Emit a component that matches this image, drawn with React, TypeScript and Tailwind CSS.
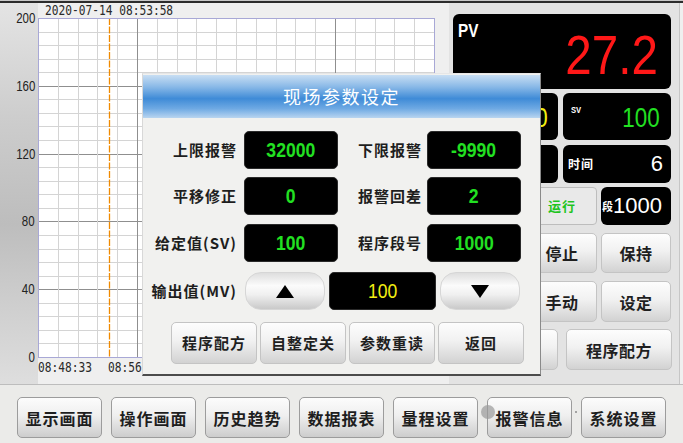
import React from "react";

const PW = 397;
const PH = 340;

function TrendPlot() {
  const hLines = Array.from({ length: 26 }, (_, i) => i);
  const vLines = Array.from({ length: 21 }, (_, j) => j);
  return (
    <svg width={PW} height={PH} className="block shrink-0">
      <rect x={0} y={0} width={PW} height={PH} fill="#ffffff" />
      {hLines.map((i) => {
        const y = Math.round((i * 339) / 25) + 0.5;
        return (
          <line
            key={"h" + i}
            x1={0}
            x2={PW}
            y1={y}
            y2={y}
            stroke={i % 5 === 0 ? "#8f8f8f" : "#d4d4d4"}
            strokeWidth={1}
          />
        );
      })}
      {vLines.map((j) => {
        const x = Math.round((j * 396) / 20) + 0.5;
        return (
          <line
            key={"v" + j}
            x1={x}
            x2={x}
            y1={0}
            y2={PH}
            stroke={j === 5 || j === 15 ? "#8f8f8f" : "#d4d4d4"}
            strokeWidth={1}
          />
        );
      })}
      {/* cursor line */}
      <line x1={71.5} x2={71.5} y1={0} y2={PH} stroke="#f08a00" strokeWidth={1.3} strokeDasharray="7 1.5" />
      <rect x={0.5} y={0.5} width={396} height={339} fill="none" stroke="#a8a8d6" strokeWidth={1} />
    </svg>
  );
}

function TrendChart() {
  const yLabels = ["200", "160", "120", "80", "40", "0"];
  return (
    <div className="w-[449px] h-full flex bg-[#efefef]">
      {/* value axis strip */}
      <div className="w-[38px] h-full shrink-0 bg-[linear-gradient(to_bottom,#e4e4e4,#cdcdcd_30%,#bdbdbd_58%,#cfcfcf_80%,#dedede)] flex flex-col items-end pt-[8px] pr-[3px]">
        {yLabels.map((l) => (
          <div key={l} className="h-[67.8px] shrink-0 flex items-start">
            <span className="block origin-right scale-x-[0.82] text-[14px] leading-[14px] text-[#222] font-['Liberation_Sans',Arial,sans-serif]">
              {l}
            </span>
          </div>
        ))}
      </div>
      <div className="flex flex-col">
        <div className="h-[15px] flex items-start pl-[7px]">
          <span className="block origin-left scale-x-[0.8] text-[14px] leading-[14px] text-[#2a2a2a] font-['DejaVu_Sans_Mono',monospace] whitespace-nowrap">
            2020-07-14 08:53:58
          </span>
        </div>
        <TrendPlot />
        <div className="flex items-start pt-[2px] text-[14px] leading-[14px] text-[#2a2a2a] font-['DejaVu_Sans_Mono',monospace]">
          <span className="block origin-left scale-x-[0.8] whitespace-nowrap">08:48:33</span>
          <span className="block origin-left scale-x-[0.8] whitespace-nowrap ml-[3px]">08:56:13</span>
        </div>
      </div>
    </div>
  );
}

const btnFace =
  "rounded-[5px] border border-[#c4c4c4] bg-[linear-gradient(to_bottom,#fdfdfd,#f1f1f1_45%,#d2d2d2)] flex items-center justify-center text-[#1f1f1f] font-bold";

function PanelButton({ label, w }: { label?: string; w: string }) {
  return (
    <div className={`${w} h-full shrink-0 ${btnFace} text-[16px] tracking-[0.5px]`}>{label}</div>
  );
}

function RightPanel() {
  const num = "font-['Liberation_Sans',Arial,sans-serif]";
  return (
    <div className="w-[234px] h-full flex">
      <div className="w-[231px] h-full bg-[#e3e3e3] border-r border-[#c6c6c6] pl-[4px] pt-[11px] flex flex-col">
        {/* PV */}
        <div className="w-[218px] h-[75px] rounded-[6px] bg-black flex justify-between items-start">
          <span className={`block origin-left scale-x-[0.85] mt-[8px] ml-[5px] text-white font-bold text-[18px] leading-none ${num}`}>
            PV
          </span>
          <span className={`block origin-right scale-x-[0.85] mt-[13px] mr-[13px] text-[#ff1818] text-[56px] leading-none ${num}`}>
            27.2
          </span>
        </div>
        {/* MV / SV */}
        <div className="mt-[4px] h-[47px] flex gap-[5px]">
          <div className="w-[105px] rounded-[6px] bg-black flex justify-end items-start">
            <span className={`block origin-right scale-x-[0.8] mt-[11px] mr-[10px] text-[#f2ee12] text-[28px] leading-none ${num}`}>
              100
            </span>
          </div>
          <div className="w-[108px] rounded-[6px] bg-black flex justify-between items-start">
            <span className={`block origin-left scale-x-[0.85] mt-[13px] ml-[8px] text-white font-bold text-[9px] leading-none ${num}`}>
              SV
            </span>
            <span className={`block origin-right scale-x-[0.8] mt-[11px] mr-[11px] text-[#22e022] text-[28px] leading-none ${num}`}>
              100
            </span>
          </div>
        </div>
        {/* times */}
        <div className="mt-[5px] h-[38px] flex gap-[5px]">
          <div className="w-[105px] rounded-[6px] bg-black" />
          <div className="w-[108px] rounded-[6px] bg-black flex items-center justify-between pl-[5px] pr-[8px]">
            <span className="text-white font-bold text-[12px] tracking-[1px]">时间</span>
            <span className={`text-white text-[22px] leading-none ${num}`}>6</span>
          </div>
        </div>
        {/* status */}
        <div className="mt-[4px] h-[38px] flex gap-[4px]">
          <div className="w-[70px] rounded-[6px] bg-black" />
          <div className="w-[70px] rounded-[4px] bg-[#e9e9e9] border border-[#bdbdbd] flex items-center justify-center">
            <span className="text-[#1fc41f] font-bold text-[13px] tracking-[1px]">运行</span>
          </div>
          <div className="w-[70px] rounded-[6px] bg-black flex items-center justify-end pr-[9px]">
            <span className="text-white font-bold text-[11px] leading-none">段</span>
            <span className={`text-white text-[22px] leading-none ${num}`}>1000</span>
          </div>
        </div>
        <div className="mt-[8px] h-[40px] flex gap-[4px]">
          <PanelButton w="w-[70px]" />
          <PanelButton label="停止" w="w-[70px]" />
          <PanelButton label="保持" w="w-[70px]" />
        </div>
        <div className="mt-[8px] h-[41px] flex gap-[4px]">
          <PanelButton w="w-[70px]" />
          <PanelButton label="手动" w="w-[70px]" />
          <PanelButton label="设定" w="w-[70px]" />
        </div>
        <div className="mt-[7px] h-[41px] flex gap-[8px]">
          <PanelButton w="w-[105px]" />
          <PanelButton label="程序配方" w="w-[106px]" />
        </div>
      </div>
      <div className="flex-1 bg-[#efefef]" />
    </div>
  );
}

function ValueBox({ value, w = "w-[94px]", color = "text-[#22e022]", bold = true }: { value: string; w?: string; color?: string; bold?: boolean }) {
  return (
    <div className={`${w} h-[38px] shrink-0 rounded-[5px] bg-black border border-[#2a2a2a] flex items-center justify-center`}>
      <span
        className={`block scale-x-[0.88] text-[20px] leading-none ${color} ${bold ? "font-bold" : ""} font-['Liberation_Sans',Arial,sans-serif]`}
      >
        {value}
      </span>
    </div>
  );
}

function Label({ text, w }: { text: string; w: string }) {
  return (
    <div className={`${w} shrink-0 text-right text-[15px] tracking-[1px] font-bold text-[#1e1e1e] whitespace-nowrap`}>{text}</div>
  );
}

function Arrow({ up }: { up: boolean }) {
  return (
    <div className="w-[80px] h-[38px] shrink-0 rounded-[16px] border border-[#d6d6d6] bg-[linear-gradient(to_bottom,#dedede,#fbfbfb_35%,#f0f0f0_60%,#c9c9c9)] flex items-center justify-center">
      <svg width="18" height="13" viewBox="0 0 18 13">
        <polygon points={up ? "9,0 18,13 0,13" : "0,0 18,0 9,13"} fill="#000" />
      </svg>
    </div>
  );
}

function ParamDialog() {
  return (
    <div className="absolute left-[142px] top-[73px] w-[399px] h-[303px] bg-[#f1f1ef] border-t border-l border-t-[#e6e6e6] border-l-[#d8d8d8] border-r border-r-[#8a8a8a] border-b-2 border-b-[#4c4c4c] flex flex-col">
      <div className="mt-[1px] h-[43px] bg-[linear-gradient(to_bottom,#c8def3,#88b8e7_28%,#3f8bd7_55%,#6ea9e3_78%,#b9d5f0)] flex items-center justify-center">
        <span className="text-white text-[18px] tracking-[1.5px]">现场参数设定</span>
      </div>
      <div className="pt-[13px] flex flex-col">
        <div className="h-[38px] flex items-center">
          <Label text="上限报警" w="w-[94px]" />
          <div className="ml-[7px]">
            <ValueBox value="32000" />
          </div>
          <Label text="下限报警" w="w-[84px]" />
          <div className="ml-[5px]">
            <ValueBox value="-9990" />
          </div>
        </div>
        <div className="mt-[8px] h-[38px] flex items-center">
          <Label text="平移修正" w="w-[94px]" />
          <div className="ml-[7px]">
            <ValueBox value="0" />
          </div>
          <Label text="报警回差" w="w-[84px]" />
          <div className="ml-[5px]">
            <ValueBox value="2" />
          </div>
        </div>
        <div className="mt-[9px] h-[38px] flex items-center">
          <Label text="给定值(SV)" w="w-[94px]" />
          <div className="ml-[7px]">
            <ValueBox value="100" />
          </div>
          <Label text="程序段号" w="w-[84px]" />
          <div className="ml-[5px]">
            <ValueBox value="1000" />
          </div>
        </div>
        <div className="mt-[10px] h-[38px] flex items-center">
          <Label text="输出值(MV)" w="w-[94px]" />
          <div className="ml-[8px]">
            <Arrow up />
          </div>
          <div className="ml-[4px]">
            <ValueBox value="100" w="w-[107px]" color="text-[#f2ee12]" bold={false} />
          </div>
          <div className="ml-[4px]">
            <Arrow up={false} />
          </div>
        </div>
        <div className="mt-[12px] h-[42px] flex gap-[3px] pl-[28px]">
          {["程序配方", "自整定关", "参数重读", "返回"].map((t) => (
            <div key={t} className={`w-[86px] h-full shrink-0 ${btnFace} text-[15px] tracking-[1px]`}>
              {t}
            </div>
          ))}
        </div>
      </div>
    </div>
  );
}

function NavBar() {
  const items = ["显示画面", "操作画面", "历史趋势", "数据报表", "量程设置", "报警信息", "系统设置"];
  return (
    <div className="relative flex-1 bg-[#ebebe9] pt-[12px] pl-[17px] flex gap-[9px]">
      {items.map((t) => (
        <div
          key={t}
          className="w-[85px] h-[41px] shrink-0 rounded-[5px] border border-[#9c9c9c] bg-[linear-gradient(to_bottom,#fcfcfc,#efefef_45%,#cdcdcd)] flex items-center justify-center text-[16px] tracking-[1px] font-bold text-[#1e1e1e]"
        >
          {t}
        </div>
      ))}
      {/* small overlay marks */}
      <div className="absolute left-[481px] top-[20px] w-[14px] h-[14px] rounded-full bg-[#9a9a9a] opacity-70" />
      <div className="absolute left-[575px] top-[26px] w-[2px] h-[2px] rounded-full bg-[#8a8a8a]" />
    </div>
  );
}

export default function App() {
  return (
    <div className="relative w-[683px] h-[443px] overflow-hidden bg-[#ededeb] flex flex-col font-['Noto_Sans_CJK_SC','Noto_Sans',sans-serif]">
      <div className="h-[1px] bg-[#c8c8c8]" />
      <div className="h-[2px] bg-[#2c2c2c]" />
      <div className="h-[381px] flex">
        <TrendChart />
        <RightPanel />
      </div>
      <div className="h-[1px] bg-[#bdbdbd]" />
      <NavBar />
      <ParamDialog />
    </div>
  );
}
